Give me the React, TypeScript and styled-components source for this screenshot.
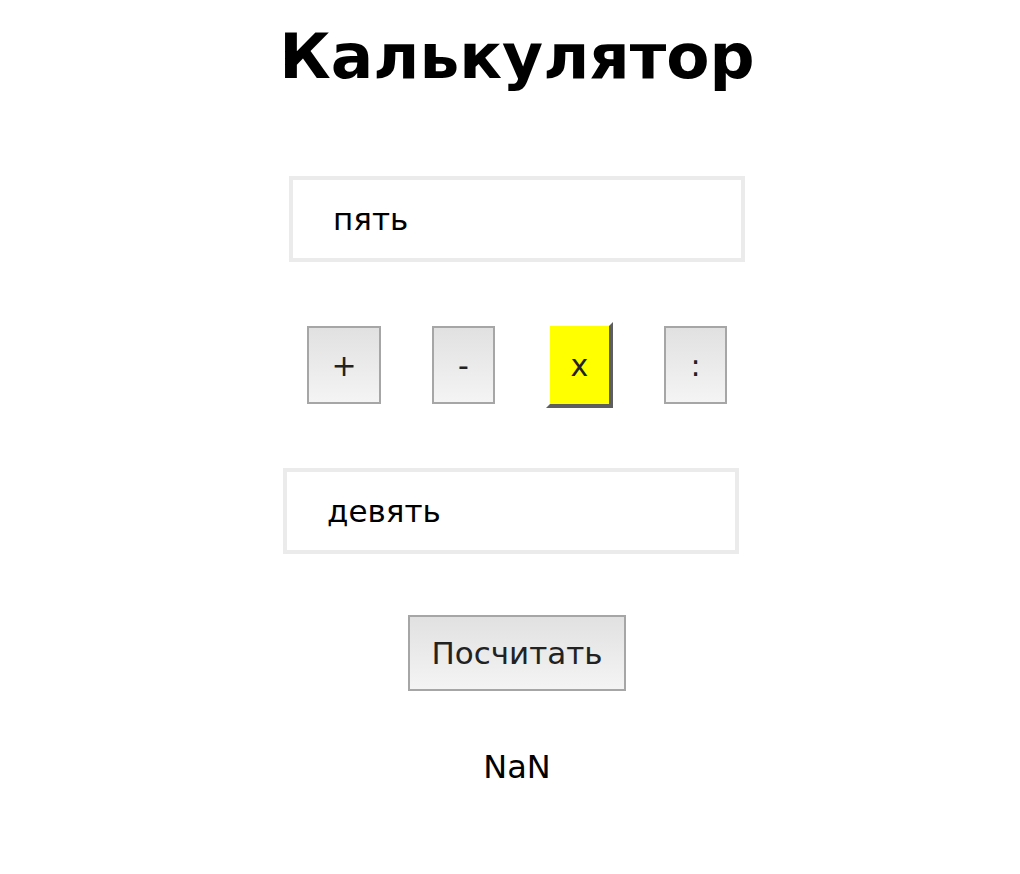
import React, { useState } from "react";
import styled, { createGlobalStyle } from "styled-components";

const GlobalStyle = createGlobalStyle`
  html, body {
    margin: 0;
    padding: 0;
    background: #ffffff;
  }
  body {
    font-family: "DejaVu Sans", Verdana, sans-serif;
    color: #000;
  }
`;

const Page = styled.main`
  width: 1020px;
  box-sizing: border-box;
  padding: 0 0 0 14px;
  display: flex;
  flex-direction: column;
  align-items: center;
`;

const Title = styled.h1`
  margin: 20px 0 0;
  font-family: "DejaVu Sans", Verdana, sans-serif;
  font-weight: bold;
  font-size: 63px;
  line-height: 74px;
`;

const NumberField = styled.input<{ $top: number; $shift?: number }>`
  box-sizing: border-box;
  width: 456px;
  height: 86px;
  margin: ${(p) => p.$top}px ${(p) => (p.$shift ?? 0) * 2}px 0 0;
  border: 4px solid #ebebeb;
  outline: none;
  padding: 0 0 0 40px;
  font-family: "DejaVu Sans", Verdana, sans-serif;
  font-size: 31px;
  color: #000;
  background: #fff;
`;

const OpsRow = styled.div`
  display: flex;
  align-items: center;
  gap: 51px;
  height: 86px;
  margin-top: 60px;
`;

const OpButton = styled.button<{ $active?: boolean; $wide?: boolean }>`
  box-sizing: border-box;
  padding: 0;
  font-family: "DejaVu Sans", Verdana, sans-serif;
  font-size: 30px;
  color: #222;
  cursor: pointer;
  display: flex;
  align-items: center;
  justify-content: center;
  width: ${(p) => (p.$active ? 67 : p.$wide ? 74 : 63)}px;
  height: ${(p) => (p.$active ? 86 : 78)}px;
  border: ${(p) => (p.$active ? "4px solid" : "2px solid #a6a6a6")};
  border-color: ${(p) =>
    p.$active ? "transparent #5e5e5e #5e5e5e transparent" : "#a6a6a6"};
  background: ${(p) =>
    p.$active ? "#ffff00" : "linear-gradient(#e1e1e1, #f4f4f4)"};
  background-clip: padding-box;
`;

const CalcButton = styled.button`
  box-sizing: border-box;
  width: 218px;
  height: 76px;
  margin-top: 61px;
  padding: 0;
  border: 2px solid #a6a6a6;
  background: linear-gradient(#e1e1e1, #f4f4f4);
  font-family: "DejaVu Sans", Verdana, sans-serif;
  font-size: 31px;
  color: #222;
  cursor: pointer;
`;

const Result = styled.output`
  display: block;
  margin-top: 56px;
  font-family: "DejaVu Sans", Verdana, sans-serif;
  font-size: 32px;
  line-height: 40px;
`;

const ops = [
  { key: "+", wide: true },
  { key: "-" },
  { key: "x" },
  { key: ":" },
];

export default function App() {
  const [a, setA] = useState("пять");
  const [b, setB] = useState("девять");
  const [op, setOp] = useState("x");
  const [result, setResult] = useState("NaN");

  const calc = () => {
    const x = Number(a);
    const y = Number(b);
    let r = NaN;
    if (op === "+") r = x + y;
    if (op === "-") r = x - y;
    if (op === "x") r = x * y;
    if (op === ":") r = x / y;
    setResult(String(r));
  };

  return (
    <>
      <GlobalStyle />
      <Page>
        <Title>Калькулятор</Title>
        <NumberField $top={82} value={a} onChange={(e) => setA(e.target.value)} />
        <OpsRow>
          {ops.map((o) => (
            <OpButton
              key={o.key}
              $wide={o.wide}
              $active={op === o.key}
              onClick={() => setOp(o.key)}
            >
              {o.key}
            </OpButton>
          ))}
        </OpsRow>
        <NumberField
          $top={60}
          $shift={6}
          value={b}
          onChange={(e) => setB(e.target.value)}
        />
        <CalcButton onClick={calc}>Посчитать</CalcButton>
        <Result>{result}</Result>
      </Page>
    </>
  );
}
